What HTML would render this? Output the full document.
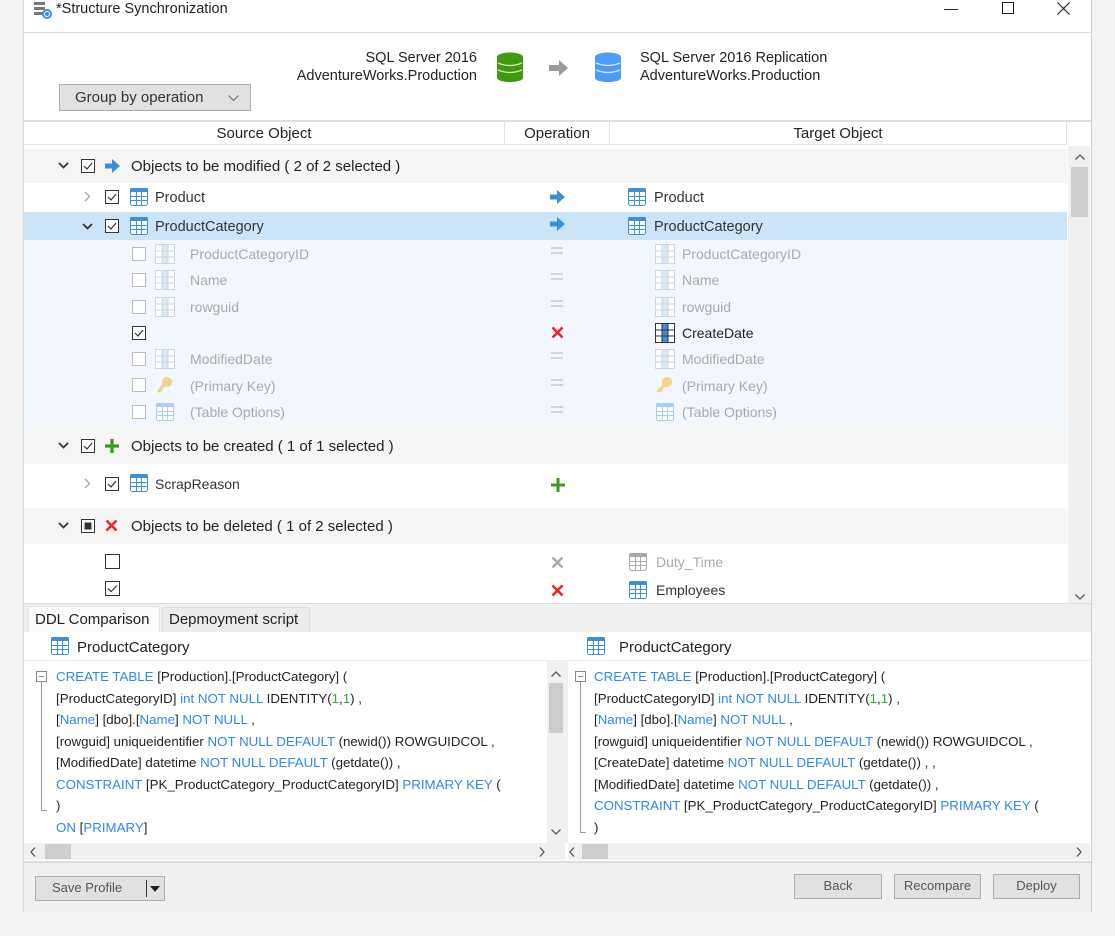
<!DOCTYPE html>
<html><head><meta charset="utf-8"><style>
*{box-sizing:border-box;margin:0;padding:0}
body{width:1115px;height:936px;background:#f3f3f3;font-family:"Liberation Sans",sans-serif;font-size:14px;color:#333;position:relative;overflow:hidden}
.a{position:absolute}
.win{left:23px;top:0;width:1069px;height:912px;background:#fff;border-right:1px solid #ccc;border-bottom:1px solid #ccc;border-left:1px solid #ddd}
.t{position:absolute;white-space:nowrap;line-height:18px}
.row{position:absolute;left:24px;width:1043px}
.btn{position:absolute;background:#e1e1e1;border:1px solid #adadad;text-align:center;color:#555;font-size:13px;line-height:22px}
.code{font-size:13.3px;line-height:21.5px;white-space:nowrap;color:#222}
.k{color:#2f86f0}.g{color:#2fae3a}
.f{color:#aaa}
.gh{font-size:15px;color:#222}
.eq{position:absolute;width:12px;height:7px;border-top:2px solid #d4d4d4;border-bottom:2px solid #d4d4d4}
</style></head><body>
<div class="a win"></div>
<svg class="a" style="left:33px;top:1px" width="20" height="18" viewBox="0 0 20 18"><rect x="1" y="1" width="11" height="3" fill="#777"/><rect x="1" y="6" width="11" height="3" fill="#777"/><rect x="1" y="11" width="11" height="3" fill="#777"/><circle cx="14" cy="13" r="5" fill="#3b8fe0"/><path d="M11.5 13a2.5 2.5 0 0 1 5 0M16.5 13a2.5 2.5 0 0 1-5 0" stroke="#fff" fill="none"/></svg>
<div class="t" style="left:56px;top:0;font-size:14.5px;color:#222">*Structure Synchronization</div>
<div class="a" style="left:944px;top:9px;width:14px;height:1px;background:#222"></div>
<div class="a" style="left:1002px;top:2px;width:12px;height:12px;border:1px solid #222"></div>
<svg class="a" style="left:1057px;top:2px" width="13" height="13"><path d="M.5 .5l12 12M12.5 .5l-12 12" stroke="#222" stroke-width="1.2"/></svg>
<div class="a" style="left:24px;top:32px;width:1067px;height:1px;background:#ddd"></div>
<div class="t" style="left:200px;top:49px;width:277px;text-align:right;color:#222;font-size:14.5px">SQL Server 2016<br>AdventureWorks.Production</div>
<svg class="a" style="left:496px;top:52px" width="28" height="30" viewBox="0 0 28 30"><ellipse cx="14" cy="5" rx="13" ry="4.5" fill="#3f9a0c"/><rect x="1" y="5" width="26" height="21" fill="#3f9a0c"/><ellipse cx="14" cy="26" rx="13" ry="4" fill="#3f9a0c"/><path d="M2 11q12 5 24 0M2 18q12 5 24 0" stroke="#cfe8c0" stroke-width="1.3" fill="none"/></svg>
<svg class="a" style="left:549px;top:59px" width="20" height="18" viewBox="0 0 20 18"><path d="M0 6h10V1l9 8-9 8v-5H0z" fill="#9a9a9a"/></svg>
<svg class="a" style="left:594px;top:52px" width="28" height="30" viewBox="0 0 28 30"><ellipse cx="14" cy="5" rx="13" ry="4.5" fill="#4a9cf5"/><rect x="1" y="5" width="26" height="21" fill="#4a9cf5"/><ellipse cx="14" cy="26" rx="13" ry="4" fill="#4a9cf5"/><path d="M2 11q12 5 24 0M2 18q12 5 24 0" stroke="#d7e9fd" stroke-width="1.3" fill="none"/></svg>
<div class="t" style="left:640px;top:49px;color:#222;font-size:14.5px">SQL Server 2016 Replication<br>AdventureWorks.Production</div>
<div class="btn" style="left:59px;top:84px;width:192px;height:27px;font-size:15px;color:#333;text-align:left;padding-left:15px;line-height:25px">Group by operation<svg style="position:absolute;left:168px;top:10px" width="11" height="7"><path d="M.5 .5l5 5 5-5" stroke="#666" fill="none"/></svg></div>
<div class="a" style="left:24px;top:120px;width:1067px;height:2px;background:#ddd"></div>
<div class="a" style="left:24px;top:122px;width:1043px;height:23px;border-bottom:1px solid #e5e5e5"></div>
<div class="a" style="left:504px;top:122px;width:1px;height:23px;background:#e0e0e0"></div>
<div class="a" style="left:609px;top:122px;width:1px;height:23px;background:#e0e0e0"></div>
<div class="a" style="left:1066px;top:122px;width:1px;height:23px;background:#e0e0e0"></div>
<div class="t gh" style="left:24px;top:125px;width:480px;text-align:center">Source Object</div>
<div class="t gh" style="left:505px;top:125px;width:104px;text-align:center">Operation</div>
<div class="t gh" style="left:610px;top:125px;width:456px;text-align:center">Target Object</div>
<div class="row" style="top:149px;height:34px;background:#f5f5f5"></div>
<div class="row" style="top:212px;height:28px;background:#cce4f7"></div>
<div class="row" style="top:240px;height:188px;background:#f1f7fd"></div>
<div class="row" style="top:428px;height:36px;background:#f5f5f5"></div>
<div class="row" style="top:508px;height:36px;background:#f5f5f5"></div>
<div class="a" style="left:1068px;top:146px;width:22px;height:458px;background:#f0f0f0"></div>
<div class="a" style="left:1071px;top:167px;width:17px;height:50px;background:#cdcdcd"></div>
<svg class="a" style="left:1075px;top:154px" width="10" height="6"><path d="M.5 5.5l4.5-4.5 4.5 4.5" stroke="#555" fill="none" stroke-width="1.3"/></svg>
<svg class="a" style="left:1075px;top:594px" width="10" height="6"><path d="M.5 .5l4.5 4.5 4.5-4.5" stroke="#555" fill="none" stroke-width="1.3"/></svg>

<svg class="a" style="left:58px;top:162px" width="11" height="7"><path d="M1 1l4.5 4.5L10 1" stroke="#333" fill="none" stroke-width="1.8"/></svg>
<svg class="a" style="left:81px;top:159px" width="14" height="14"><rect x=".5" y=".5" width="13" height="13" fill="#fff" stroke="#333"/><path d="M3 7l3 3 5-6" stroke="#333" fill="none" stroke-width="1.2"/></svg>
<svg class="a" style="left:105px;top:159px" width="15" height="14" viewBox="0 0 15 14"><path d="M0 4.5h7V0l8 7-8 7V9.5H0z" fill="#3a8fd7"/></svg>
<div class="t gh" style="left:131px;top:158px">Objects to be modified ( 2 of 2 selected )</div>
<svg class="a" style="left:84px;top:191px" width="7" height="11"><path d="M1 1l4.5 4.5L1 10" stroke="#aaa" fill="none" stroke-width="1.5"/></svg>
<svg class="a" style="left:105px;top:190px" width="14" height="14"><rect x=".5" y=".5" width="13" height="13" fill="#fff" stroke="#333"/><path d="M3 7l3 3 5-6" stroke="#333" fill="none" stroke-width="1.2"/></svg>
<svg class="a" style="left:130px;top:188px" width="18" height="18" viewBox="0 0 18 18"><rect x=".5" y=".5" width="17" height="17" rx="2" fill="#fff" stroke="#3d8fd6"/><rect width="18" height="4" rx="1.5" fill="#3d8fd6"/><path d="M1 8.5h16M1 12.5h16M6.5 4v13M11.5 4v13" stroke="#3d8fd6"/></svg>
<div class="t" style="left:155px;top:189px;font-size:14.5px">Product</div>
<svg class="a" style="left:550px;top:190px" width="15" height="14" viewBox="0 0 15 14"><path d="M0 4.5h7V0l8 7-8 7V9.5H0z" fill="#3a8fd7"/></svg>
<svg class="a" style="left:628px;top:188px" width="18" height="18" viewBox="0 0 18 18"><rect x=".5" y=".5" width="17" height="17" rx="2" fill="#fff" stroke="#3d8fd6"/><rect width="18" height="4" rx="1.5" fill="#3d8fd6"/><path d="M1 8.5h16M1 12.5h16M6.5 4v13M11.5 4v13" stroke="#3d8fd6"/></svg>
<div class="t" style="left:654px;top:189px;font-size:14.5px">Product</div>
<svg class="a" style="left:82px;top:223px" width="11" height="7"><path d="M1 1l4.5 4.5L10 1" stroke="#333" fill="none" stroke-width="1.8"/></svg>
<svg class="a" style="left:105px;top:219px" width="14" height="14"><rect x=".5" y=".5" width="13" height="13" fill="#fff" stroke="#333"/><path d="M3 7l3 3 5-6" stroke="#333" fill="none" stroke-width="1.2"/></svg>
<svg class="a" style="left:130px;top:217px" width="18" height="18" viewBox="0 0 18 18"><rect x=".5" y=".5" width="17" height="17" rx="2" fill="#fff" stroke="#3d8fd6"/><rect width="18" height="4" rx="1.5" fill="#3d8fd6"/><path d="M1 8.5h16M1 12.5h16M6.5 4v13M11.5 4v13" stroke="#3d8fd6"/></svg>
<div class="t" style="left:155px;top:218px;font-size:14.5px">ProductCategory</div>
<svg class="a" style="left:550px;top:217px" width="15" height="14" viewBox="0 0 15 14"><path d="M0 4.5h7V0l8 7-8 7V9.5H0z" fill="#3a8fd7"/></svg>
<svg class="a" style="left:628px;top:217px" width="18" height="18" viewBox="0 0 18 18"><rect x=".5" y=".5" width="17" height="17" rx="2" fill="#fff" stroke="#3d8fd6"/><rect width="18" height="4" rx="1.5" fill="#3d8fd6"/><path d="M1 8.5h16M1 12.5h16M6.5 4v13M11.5 4v13" stroke="#3d8fd6"/></svg>
<div class="t" style="left:654px;top:218px;font-size:14.5px">ProductCategory</div>

<div class="a" style="left:132px;top:247px;width:14px;height:14px;border:1px solid #bbb;background:#fff"></div>
<svg class="a" style="left:155px;top:244px" width="20" height="20" viewBox="0 0 20 20"><rect x=".5" y=".5" width="19" height="19" fill="#fff" stroke="#c9d6e3"/><rect x="7" y="1" width="6" height="18" fill="#dbe9f7"/><path d="M7 1v18M13 1v18M1 7h19M1 13h19" stroke="#c9d6e3"/></svg>
<div class="t f" style="left:190px;top:245px">ProductCategoryID</div>
<div class="eq" style="left:551px;top:247px"></div>
<svg class="a" style="left:655px;top:244px" width="20" height="20" viewBox="0 0 20 20"><rect x=".5" y=".5" width="19" height="19" fill="#fff" stroke="#c9d6e3"/><rect x="7" y="1" width="6" height="18" fill="#dbe9f7"/><path d="M7 1v18M13 1v18M1 7h19M1 13h19" stroke="#c9d6e3"/></svg>
<div class="t f" style="left:682px;top:245px">ProductCategoryID</div>

<div class="a" style="left:132px;top:273px;width:14px;height:14px;border:1px solid #bbb;background:#fff"></div>
<svg class="a" style="left:155px;top:270px" width="20" height="20" viewBox="0 0 20 20"><rect x=".5" y=".5" width="19" height="19" fill="#fff" stroke="#c9d6e3"/><rect x="7" y="1" width="6" height="18" fill="#dbe9f7"/><path d="M7 1v18M13 1v18M1 7h19M1 13h19" stroke="#c9d6e3"/></svg>
<div class="t f" style="left:190px;top:271px">Name</div>
<div class="eq" style="left:551px;top:273px"></div>
<svg class="a" style="left:655px;top:270px" width="20" height="20" viewBox="0 0 20 20"><rect x=".5" y=".5" width="19" height="19" fill="#fff" stroke="#c9d6e3"/><rect x="7" y="1" width="6" height="18" fill="#dbe9f7"/><path d="M7 1v18M13 1v18M1 7h19M1 13h19" stroke="#c9d6e3"/></svg>
<div class="t f" style="left:682px;top:271px">Name</div>

<div class="a" style="left:132px;top:300px;width:14px;height:14px;border:1px solid #bbb;background:#fff"></div>
<svg class="a" style="left:155px;top:297px" width="20" height="20" viewBox="0 0 20 20"><rect x=".5" y=".5" width="19" height="19" fill="#fff" stroke="#c9d6e3"/><rect x="7" y="1" width="6" height="18" fill="#dbe9f7"/><path d="M7 1v18M13 1v18M1 7h19M1 13h19" stroke="#c9d6e3"/></svg>
<div class="t f" style="left:190px;top:298px">rowguid</div>
<div class="eq" style="left:551px;top:300px"></div>
<svg class="a" style="left:655px;top:297px" width="20" height="20" viewBox="0 0 20 20"><rect x=".5" y=".5" width="19" height="19" fill="#fff" stroke="#c9d6e3"/><rect x="7" y="1" width="6" height="18" fill="#dbe9f7"/><path d="M7 1v18M13 1v18M1 7h19M1 13h19" stroke="#c9d6e3"/></svg>
<div class="t f" style="left:682px;top:298px">rowguid</div>

<svg class="a" style="left:132px;top:326px" width="14" height="14"><rect x=".5" y=".5" width="13" height="13" fill="#fff" stroke="#333"/><path d="M3 7l3 3 5-6" stroke="#333" fill="none" stroke-width="1.2"/></svg>
<svg class="a" style="left:551px;top:326px" width="13" height="13" viewBox="0 0 13 13"><path d="M1.5 1.5l10 10M11.5 1.5l-10 10" stroke="#e8262b" stroke-width="2.6"/></svg>
<svg class="a" style="left:655px;top:323px" width="20" height="20" viewBox="0 0 20 20"><rect x=".5" y=".5" width="19" height="19" fill="#fff" stroke="#333"/><rect x="7" y="1" width="6" height="18" fill="#3d8fd6"/><path d="M7 1v18M13 1v18M1 7h19M1 13h19" stroke="#333"/></svg>
<div class="t" style="left:682px;top:324px;color:#222">CreateDate</div>

<div class="a" style="left:132px;top:352px;width:14px;height:14px;border:1px solid #bbb;background:#fff"></div>
<svg class="a" style="left:155px;top:349px" width="20" height="20" viewBox="0 0 20 20"><rect x=".5" y=".5" width="19" height="19" fill="#fff" stroke="#c9d6e3"/><rect x="7" y="1" width="6" height="18" fill="#dbe9f7"/><path d="M7 1v18M13 1v18M1 7h19M1 13h19" stroke="#c9d6e3"/></svg>
<div class="t f" style="left:190px;top:350px">ModifiedDate</div>
<div class="eq" style="left:551px;top:352px"></div>
<svg class="a" style="left:655px;top:349px" width="20" height="20" viewBox="0 0 20 20"><rect x=".5" y=".5" width="19" height="19" fill="#fff" stroke="#c9d6e3"/><rect x="7" y="1" width="6" height="18" fill="#dbe9f7"/><path d="M7 1v18M13 1v18M1 7h19M1 13h19" stroke="#c9d6e3"/></svg>
<div class="t f" style="left:682px;top:350px">ModifiedDate</div>

<div class="a" style="left:132px;top:378px;width:14px;height:14px;border:1px solid #bbb;background:#fff"></div>
<svg class="a" style="left:156px;top:376px" width="18" height="18" viewBox="0 0 18 18"><circle cx="11" cy="6" r="5" fill="#f3d28c"/><path d="M8 9l-6 7M4 13l2 2" stroke="#f3d28c" stroke-width="3"/></svg>
<div class="t f" style="left:190px;top:377px">(Primary Key)</div>
<div class="eq" style="left:551px;top:379px"></div>
<svg class="a" style="left:656px;top:376px" width="18" height="18" viewBox="0 0 18 18"><circle cx="11" cy="6" r="5" fill="#f3d28c"/><path d="M8 9l-6 7M4 13l2 2" stroke="#f3d28c" stroke-width="3"/></svg>
<div class="t f" style="left:682px;top:377px">(Primary Key)</div>

<div class="a" style="left:132px;top:405px;width:14px;height:14px;border:1px solid #bbb;background:#fff"></div>
<svg class="a" style="left:156px;top:403px" width="18" height="18" viewBox="0 0 18 18"><rect x=".5" y=".5" width="17" height="17" rx="2" fill="#fff" stroke="#a9cdee"/><rect width="18" height="4" rx="1.5" fill="#a9cdee"/><path d="M1 8.5h16M1 12.5h16M6.5 4v13M11.5 4v13" stroke="#a9cdee"/></svg>
<div class="t f" style="left:190px;top:403px">(Table Options)</div>
<div class="eq" style="left:551px;top:406px"></div>
<svg class="a" style="left:656px;top:403px" width="18" height="18" viewBox="0 0 18 18"><rect x=".5" y=".5" width="17" height="17" rx="2" fill="#fff" stroke="#a9cdee"/><rect width="18" height="4" rx="1.5" fill="#a9cdee"/><path d="M1 8.5h16M1 12.5h16M6.5 4v13M11.5 4v13" stroke="#a9cdee"/></svg>
<div class="t f" style="left:682px;top:403px">(Table Options)</div>

<svg class="a" style="left:58px;top:442px" width="11" height="7"><path d="M1 1l4.5 4.5L10 1" stroke="#333" fill="none" stroke-width="1.8"/></svg>
<svg class="a" style="left:81px;top:439px" width="14" height="14"><rect x=".5" y=".5" width="13" height="13" fill="#fff" stroke="#333"/><path d="M3 7l3 3 5-6" stroke="#333" fill="none" stroke-width="1.2"/></svg>
<svg class="a" style="left:105px;top:439px" width="14" height="14" viewBox="0 0 14 14"><path d="M7 0v14M0 7h14" stroke="#3a9a1e" stroke-width="3.2"/></svg>
<div class="t gh" style="left:131px;top:438px">Objects to be created ( 1 of 1 selected )</div>
<svg class="a" style="left:84px;top:478px" width="7" height="11"><path d="M1 1l4.5 4.5L1 10" stroke="#aaa" fill="none" stroke-width="1.5"/></svg>
<svg class="a" style="left:105px;top:477px" width="14" height="14"><rect x=".5" y=".5" width="13" height="13" fill="#fff" stroke="#333"/><path d="M3 7l3 3 5-6" stroke="#333" fill="none" stroke-width="1.2"/></svg>
<svg class="a" style="left:130px;top:474px" width="18" height="18" viewBox="0 0 18 18"><rect x=".5" y=".5" width="17" height="17" rx="2" fill="#fff" stroke="#3d8fd6"/><rect width="18" height="4" rx="1.5" fill="#3d8fd6"/><path d="M1 8.5h16M1 12.5h16M6.5 4v13M11.5 4v13" stroke="#3d8fd6"/></svg>
<div class="t" style="left:155px;top:475px">ScrapReason</div>
<svg class="a" style="left:551px;top:478px" width="14" height="14" viewBox="0 0 14 14"><path d="M7 0v14M0 7h14" stroke="#3a9a1e" stroke-width="3"/></svg>

<svg class="a" style="left:58px;top:522px" width="11" height="7"><path d="M1 1l4.5 4.5L10 1" stroke="#333" fill="none" stroke-width="1.8"/></svg>
<svg class="a" style="left:81px;top:519px" width="14" height="14"><rect x=".5" y=".5" width="13" height="13" fill="#fff" stroke="#333"/><rect x="3.5" y="3.5" width="7" height="7" fill="#333"/></svg>
<svg class="a" style="left:105px;top:519px" width="13" height="13" viewBox="0 0 13 13"><path d="M1.5 1.5l10 10M11.5 1.5l-10 10" stroke="#e8262b" stroke-width="2.6"/></svg>
<div class="t gh" style="left:131px;top:518px">Objects to be deleted ( 1 of 2 selected )</div>
<div class="a" style="left:105px;top:554px;width:15px;height:15px;border:1px solid #333;background:#fff"></div>
<svg class="a" style="left:551px;top:556px" width="13" height="13" viewBox="0 0 13 13"><path d="M1.5 1.5l10 10M11.5 1.5l-10 10" stroke="#aaa" stroke-width="2.4"/></svg>
<svg class="a" style="left:629px;top:553px" width="18" height="18" viewBox="0 0 18 18"><rect x=".5" y=".5" width="17" height="17" rx="2" fill="#fff" stroke="#aaa"/><rect width="18" height="4" rx="1.5" fill="#aaa"/><path d="M1 8.5h16M1 12.5h16M6.5 4v13M11.5 4v13" stroke="#aaa"/></svg>
<div class="t f" style="left:656px;top:553px">Duty_Time</div>
<svg class="a" style="left:105px;top:581px" width="15" height="15"><rect x=".5" y=".5" width="14" height="14" fill="#fff" stroke="#333"/><path d="M3 7.5l3 3 6-6" stroke="#333" fill="none" stroke-width="1.2"/></svg>
<svg class="a" style="left:551px;top:584px" width="13" height="13" viewBox="0 0 13 13"><path d="M1.5 1.5l10 10M11.5 1.5l-10 10" stroke="#e8262b" stroke-width="2.6"/></svg>
<svg class="a" style="left:629px;top:581px" width="18" height="18" viewBox="0 0 18 18"><rect x=".5" y=".5" width="17" height="17" rx="2" fill="#fff" stroke="#3d8fd6"/><rect width="18" height="4" rx="1.5" fill="#3d8fd6"/><path d="M1 8.5h16M1 12.5h16M6.5 4v13M11.5 4v13" stroke="#3d8fd6"/></svg>
<div class="t" style="left:656px;top:581px">Employees</div>

<div class="a" style="left:24px;top:603px;width:1067px;height:29px;background:#f0f0f0;border-top:1px solid #ddd"></div>
<div class="a" style="left:28px;top:606px;width:132px;height:26px;background:#fafafa;border:1px solid #e5e5e5;border-bottom:none"></div>
<div class="t gh" style="left:35px;top:611px">DDL Comparison</div>
<div class="a" style="left:162px;top:607px;width:148px;height:25px;background:#ececec;border:1px solid #ddd;border-bottom:none"></div>
<div class="t gh" style="left:169px;top:611px">Depmoyment script</div>
<div class="a" style="left:24px;top:632px;width:1067px;height:29px;background:#fff;border-bottom:1px solid #eee"></div>
<svg class="a" style="left:51px;top:637px" width="18" height="18" viewBox="0 0 18 18"><rect x=".5" y=".5" width="17" height="17" rx="2" fill="#fff" stroke="#3d8fd6"/><rect width="18" height="4" rx="1.5" fill="#3d8fd6"/><path d="M1 8.5h16M1 12.5h16M6.5 4v13M11.5 4v13" stroke="#3d8fd6"/></svg>
<div class="t gh" style="left:77px;top:639px">ProductCategory</div>
<svg class="a" style="left:587px;top:637px" width="18" height="18" viewBox="0 0 18 18"><rect x=".5" y=".5" width="17" height="17" rx="2" fill="#fff" stroke="#3d8fd6"/><rect width="18" height="4" rx="1.5" fill="#3d8fd6"/><path d="M1 8.5h16M1 12.5h16M6.5 4v13M11.5 4v13" stroke="#3d8fd6"/></svg>
<div class="t gh" style="left:619px;top:639px">ProductCategory</div>

<div class="a" style="left:24px;top:661px;width:541px;height:182px;background:#fff;overflow:hidden">
 <div class="a" style="left:12px;top:10px;width:11px;height:11px;border:1px solid #888"></div>
 <div class="a" style="left:15px;top:15px;width:5px;height:1px;background:#888"></div>
 <div class="a" style="left:17px;top:21px;width:1px;height:128px;background:#999"></div>
 <div class="a" style="left:17px;top:149px;width:6px;height:1px;background:#999"></div>
 <div class="a code" style="left:32px;top:5px">
  <div><span class="k">CREATE TABLE</span> [Production].[ProductCategory] (</div>
  <div>[ProductCategoryID] <span class="k">int NOT NULL</span> IDENTITY(<span class="g">1</span>,<span class="g">1</span>) ,</div>
  <div>[<span class="k">Name</span>] [dbo].[<span class="k">Name</span>] <span class="k">NOT NULL</span> ,</div>
  <div>[rowguid] uniqueidentifier <span class="k">NOT NULL DEFAULT</span> (newid()) ROWGUIDCOL ,</div>
  <div>[ModifiedDate] datetime <span class="k">NOT NULL DEFAULT</span> (getdate()) ,</div>
  <div><span class="k">CONSTRAINT</span> [PK_ProductCategory_ProductCategoryID] <span class="k">PRIMARY KEY</span> (</div>
  <div>)</div>
  <div><span class="k">ON</span> [<span class="k">PRIMARY</span>]</div>
 </div>
 <div class="a" style="left:523px;top:0;width:18px;height:182px;background:#f0f0f0"></div>
 <div class="a" style="left:525px;top:22px;width:14px;height:50px;background:#cdcdcd"></div>
 <svg class="a" style="left:527px;top:10px" width="10" height="6"><path d="M.5 5.5l4.5-4.5 4.5 4.5" stroke="#555" fill="none" stroke-width="1.3"/></svg>
 <svg class="a" style="left:527px;top:168px" width="10" height="6"><path d="M.5 .5l4.5 4.5 4.5-4.5" stroke="#555" fill="none" stroke-width="1.3"/></svg>
</div>
<div class="a" style="left:24px;top:843px;width:541px;height:17px;background:#f0f0f0"></div>
<div class="a" style="left:45px;top:844px;width:26px;height:15px;background:#cdcdcd"></div>
<svg class="a" style="left:30px;top:847px" width="6" height="10"><path d="M5 .5L1 5l4 4.5" stroke="#555" fill="none" stroke-width="1.3"/></svg>
<svg class="a" style="left:539px;top:847px" width="6" height="10"><path d="M1 .5L5 5l-4 4.5" stroke="#555" fill="none" stroke-width="1.3"/></svg>
<div class="a" style="left:568px;top:661px;width:522px;height:182px;background:#fff;overflow:hidden">
 <div class="a" style="left:7px;top:10px;width:11px;height:11px;border:1px solid #888"></div>
 <div class="a" style="left:10px;top:15px;width:5px;height:1px;background:#888"></div>
 <div class="a" style="left:12px;top:21px;width:1px;height:150px;background:#999"></div>
 <div class="a" style="left:12px;top:171px;width:6px;height:1px;background:#999"></div>
 <div class="a code" style="left:26px;top:5px">
  <div><span class="k">CREATE TABLE</span> [Production].[ProductCategory] (</div>
  <div>[ProductCategoryID] <span class="k">int NOT NULL</span> IDENTITY(<span class="g">1</span>,<span class="g">1</span>) ,</div>
  <div>[<span class="k">Name</span>] [dbo].[<span class="k">Name</span>] <span class="k">NOT NULL</span> ,</div>
  <div>[rowguid] uniqueidentifier <span class="k">NOT NULL DEFAULT</span> (newid()) ROWGUIDCOL ,</div>
  <div>[CreateDate] datetime <span class="k">NOT NULL DEFAULT</span> (getdate()) , ,</div>
  <div>[ModifiedDate] datetime <span class="k">NOT NULL DEFAULT</span> (getdate()) ,</div>
  <div><span class="k">CONSTRAINT</span> [PK_ProductCategory_ProductCategoryID] <span class="k">PRIMARY KEY</span> (</div>
  <div>)</div>
 </div>
</div>
<div class="a" style="left:565px;top:661px;width:3px;height:182px;background:#f0f0f0"></div>
<div class="a" style="left:568px;top:843px;width:522px;height:17px;background:#f0f0f0"></div>
<div class="a" style="left:582px;top:844px;width:26px;height:15px;background:#cdcdcd"></div>
<svg class="a" style="left:569px;top:847px" width="6" height="10"><path d="M5 .5L1 5l4 4.5" stroke="#555" fill="none" stroke-width="1.3"/></svg>
<svg class="a" style="left:1076px;top:847px" width="6" height="10"><path d="M1 .5L5 5l-4 4.5" stroke="#555" fill="none" stroke-width="1.3"/></svg>
<div class="a" style="left:24px;top:861px;width:1067px;height:51px;background:#f0f0f0;border-top:2px solid #ddd"></div>
<div class="btn" style="left:35px;top:876px;width:130px;height:25px;text-align:left;padding-left:16px">Save Profile<span style="position:absolute;left:110px;top:3px;width:1px;height:17px;background:#333"></span><svg style="position:absolute;left:114px;top:9px" width="10" height="6"><path d="M0 0h10L5 6z" fill="#222"/></svg></div>
<div class="btn" style="left:794px;top:874px;width:88px;height:25px">Back</div>
<div class="btn" style="left:894px;top:874px;width:87px;height:25px">Recompare</div>
<div class="btn" style="left:993px;top:874px;width:87px;height:25px">Deploy</div>
</body></html>
